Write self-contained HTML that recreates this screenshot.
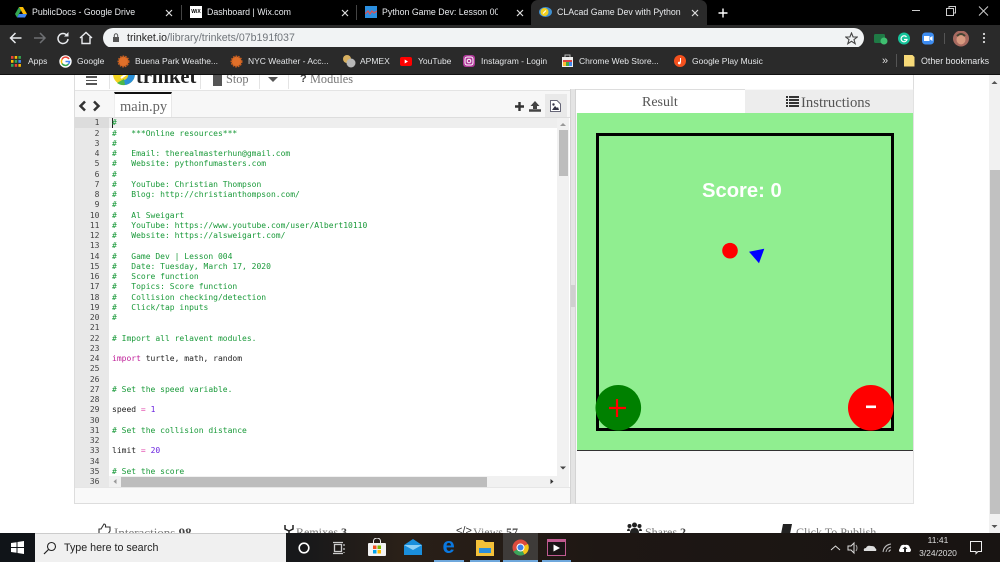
<!DOCTYPE html>
<html><head><meta charset="utf-8"><style>
html,body{margin:0;padding:0;width:1000px;height:562px;overflow:hidden;background:#fff}
div,span,svg,pre{position:absolute}
pre span{position:static}
.t{white-space:nowrap;font-family:"Liberation Sans",sans-serif}
.tab{color:#e8eaed;font-size:8.8px;top:6px;line-height:13px}
.bm{color:#e4e6e8;font-size:8.5px;top:55px;line-height:12px}
.s{font-family:"Liberation Serif",serif;white-space:nowrap}
.f{color:#777;font-size:12px;top:525.5px;line-height:13px;font-family:"Liberation Serif",serif;white-space:nowrap}
.f b{color:#444}
.c{color:#1a9a3a}.k{color:#c0209a}.n{color:#6a22e0}.o{color:#e040a8}
</style></head><body>
<!-- page content -->
<div style="left:74px;top:74px;height:15px;border-bottom:1px solid #ddd;border-left:1px solid #ddd;border-right:1px solid #ddd;box-sizing:content-box;width:838px"></div>
<div style="left:109px;top:74px;width:1px;height:15px;background:#e4e4e4"></div>
<div style="left:200px;top:74px;width:1px;height:15px;background:#e4e4e4"></div>
<div style="left:259px;top:74px;width:1px;height:15px;background:#e4e4e4"></div>
<div style="left:288px;top:74px;width:1px;height:15px;background:#e4e4e4"></div>
<div style="left:86px;top:76px;width:11px;height:1.500px;background:#555"></div>
<div style="left:86px;top:79.500px;width:11px;height:1.500px;background:#555"></div>
<div style="left:86px;top:83px;width:11px;height:1.500px;background:#555"></div>
<svg style="left:112px;top:72px" width="24" height="14"><circle cx="12" cy="2" r="11" fill="#f2d320"/><path d="M12 13A11 11 0 0 0 23 2L16 2A5 5 0 0 1 12 8Z" fill="#2a8fd8"/><path d="M5 11A11 11 0 0 0 13 13L12 7Z" fill="#4cb848"/><path d="M9 6L16 1" stroke="#fff" stroke-width="2"/></svg>
<div class="s" style="left:136px;top:65px;font-size:20.500px;font-weight:bold;color:#222;line-height:24px">trinket</div>
<div style="left:213px;top:74px;width:9px;height:12px;background:#555"></div>
<div class="s" style="left:226px;top:71.500px;font-size:12.300px;color:#777;line-height:14px">Stop</div>
<svg style="left:268px;top:77px" width="10" height="6"><path d="M0 0H10L5 5Z" fill="#555"/></svg>
<div class="t" style="left:300px;top:72px;font-size:11px;font-weight:bold;color:#444;line-height:14px">?</div>
<div class="s" style="left:310px;top:71.500px;font-size:12.300px;color:#777;line-height:14px">Modules</div>

<!-- editor -->
<div style="left:74px;top:89px;width:496px;height:415px;background:#fff;border-left:1px solid #ddd;border-bottom:1px solid #ddd;box-sizing:border-box"></div>
<div style="left:75px;top:90px;width:495px;height:27px;background:#f7f7f7;border-top:1px solid #e4e4e4;box-sizing:border-box"></div>
<div style="left:75px;top:116.500px;width:495px;height:1px;background:#ddd"></div>
<svg style="left:76px;top:100px" width="26" height="12"><path d="M9 1.500L4.500 6L9 10.500" fill="none" stroke="#333" stroke-width="2.500"/><path d="M18 1.500L22.500 6L18 10.500" fill="none" stroke="#333" stroke-width="2.500"/></svg>
<div style="left:114px;top:91.500px;width:58px;height:25.500px;background:#fff;box-sizing:border-box;border-top:2.500px solid #111;border-left:1px solid #eee;border-right:1px solid #e8e8e8"></div>
<div class="s" style="left:120px;top:97.500px;font-size:14.500px;color:#666;line-height:18px">main.py</div>
<svg style="left:514px;top:100px" width="30" height="13"><path d="M1 6.500H10M5.500 2V11" stroke="#333" stroke-width="2.400"/><path d="M21 1L25.500 6H23V9H19V6H16.500Z" fill="#444"/><path d="M15 10.500H27" stroke="#444" stroke-width="2.500"/></svg>
<div style="left:545px;top:94px;width:21.500px;height:22.500px;background:#e9e9e9"></div>
<svg style="left:550px;top:100px" width="11" height="12"><path d="M.5.500H7L10.500 4V11.500H.5Z" fill="#fff" stroke="#667"/><path d="M2 10L5 6L7 8L8 7L9 10Z" fill="#334"/><circle cx="3.500" cy="4.500" r="1.200" fill="#334"/></svg>
<div style="left:75px;top:117px;width:34px;height:370px;background:#e8e8e8"></div>
<div style="left:75px;top:117px;width:34px;height:10.500px;background:#dcdcdc"></div>
<div style="left:109px;top:117.500px;width:449px;height:10.500px;background:#eeeeee"></div>
<div style="left:112px;top:118px;width:1px;height:10px;background:#222"></div>
<pre style="left:75px;top:118.300px;width:24.500px;margin:0;text-align:right;font:8px/10.257px 'DejaVu Sans Mono',monospace;color:#444">1
2
3
4
5
6
7
8
9
10
11
12
13
14
15
16
17
18
19
20
21
22
23
24
25
26
27
28
29
30
31
32
33
34
35
36</pre>
<pre style="left:112px;top:118.300px;margin:0;height:357px;overflow:hidden;font:8px/10.257px 'DejaVu Sans Mono',monospace;color:#222"><span class="c">#
#   ***Online resources***
#
#   Email: therealmasterhun@gmail.com
#   Website: pythonfumasters.com
#
#   YouTube: Christian Thompson
#   Blog: http://christianthompson.com/
#
#   Al Sweigart
#   YouTube: https://www.youtube.com/user/Albert10110
#   Website: https://alsweigart.com/
#
#   Game Dev | Lesson 004
#   Date: Tuesday, March 17, 2020
#   Score function
#   Topics: Score function
#   Collision checking/detection
#   Click/tap inputs
#

# Import all relavent modules.
</span>
<span class="k">import</span> turtle, math, random


<span class="c"># Set the speed variable.</span>

speed <span class="o">=</span> <span class="n">1</span>

<span class="c"># Set the collision distance</span>

limit <span class="o">=</span> <span class="n">20</span>

<span class="c"># Set the score</span></pre>
<!-- code scrollbars -->
<div style="left:557px;top:117.500px;width:12px;height:370px;background:#f1f1f1"></div>
<svg style="left:558px;top:121px" width="10" height="6"><path d="M2 5H8L5 2Z" fill="#999"/></svg>
<div style="left:559px;top:130px;width:9px;height:46px;background:#bdbdbd"></div>
<svg style="left:558px;top:465px" width="10" height="6"><path d="M2 1.500H8L5 4.500Z" fill="#444"/></svg>
<div style="left:109px;top:476px;width:449px;height:11px;background:#f1f1f1"></div>
<svg style="left:112px;top:477px" width="6" height="9"><path d="M4.500 2V7L1.500 4.500Z" fill="#999"/></svg>
<div style="left:121px;top:476.500px;width:366px;height:10px;background:#bdbdbd"></div>
<svg style="left:549px;top:477px" width="6" height="9"><path d="M1.500 2V7L4.500 4.500Z" fill="#333"/></svg>
<div style="left:75px;top:487px;width:495px;height:16px;background:#f9f9f9;border-top:1px solid #e6e6e6;box-sizing:border-box"></div>
<!-- divider -->
<div style="left:570px;top:89px;width:6px;height:415px;background:#e4e4e4;border-left:1px solid #d4d4d4;border-right:1px solid #d4d4d4;box-sizing:border-box"></div>
<div style="left:571px;top:285px;width:4px;height:22px;background:#cfcfcf"></div>

<!-- result panel -->
<div style="left:576px;top:89px;width:337.500px;height:415px;background:#f8f8f8;border-right:1px solid #e2e2e2;border-bottom:1px solid #e2e2e2;box-sizing:border-box"></div>
<div style="left:576px;top:89px;width:169px;height:24px;background:#fff;border-top:1px solid #ddd;box-sizing:border-box"></div>
<div style="left:745px;top:90px;width:168px;height:23px;background:#ededed"></div>
<div class="s" style="left:642px;top:94.500px;font-size:14px;color:#555;line-height:16px">Result</div>
<svg style="left:786px;top:96px" width="13" height="11"><path d="M0 1H2M3 1H13M0 4H2M3 4H13M0 7H2M3 7H13M0 10H2M3 10H13" stroke="#333" stroke-width="2"/></svg>
<div class="s" style="left:801px;top:94.500px;font-size:14.700px;color:#555;line-height:16px">Instructions</div>
<div style="left:577px;top:113px;width:336px;height:337px;background:#90ee90"></div>
<div style="left:577px;top:450px;width:336px;height:1px;background:#333"></div>
<div style="left:596px;top:133px;width:297.500px;height:298px;box-sizing:border-box;border:3.300px solid #000"></div>
<div class="t" style="left:702px;top:179.500px;font-size:20.200px;font-weight:bold;color:#fff;line-height:23px">Score: 0</div>
<svg style="left:577px;top:113px" width="336" height="337">
<circle cx="153" cy="137.700" r="7.800" fill="#f00"/>
<path d="M172 138.700L187.300 135.700L182 150.300Z" fill="#00f"/>
<circle cx="41.300" cy="294.800" r="22.800" fill="#008000"/>
<path d="M32 295H49M40 286V304" stroke="#f00" stroke-width="2.200" fill="none"/>
<circle cx="293.800" cy="294.800" r="22.800" fill="#f00"/>
<path d="M289 293.800H299" stroke="#fff" stroke-width="2.600" fill="none"/>
</svg>

<!-- page scrollbar -->
<div style="left:989px;top:75px;width:11px;height:458px;background:#f1f1f1"></div>
<svg style="left:989px;top:78px" width="11" height="8"><path d="M2.500 6H8.500L5.500 3Z" fill="#555"/></svg>
<div style="left:989.500px;top:170px;width:10px;height:344px;background:#c1c1c1"></div>
<svg style="left:989px;top:523px" width="11" height="8"><path d="M2.500 2H8.500L5.500 5Z" fill="#555"/></svg>

<!-- footer -->
<svg style="left:98px;top:523px" width="14" height="12"><path d="M1 11V6H3L6 1Q8 1 7.500 4H12V8L10 11Z" fill="none" stroke="#333" stroke-width="1.100"/></svg>
<div class="f" style="left:114px;font-size:13px">Interactions <b>98</b></div>
<svg style="left:283px;top:523px" width="12" height="12"><path d="M2 2V6L6 8V11M10 2V6L6 8" fill="none" stroke="#222" stroke-width="1.500"/></svg>
<div class="f" style="left:296px">Remixes <b>3</b></div>
<div class="t" style="left:456px;top:525px;font-size:11px;color:#333;line-height:13px">&lt;/&gt;</div>
<div class="f" style="left:473px">Views <b>57</b></div>
<svg style="left:627px;top:522px" width="15" height="11"><circle cx="7.500" cy="3" r="2.500" fill="#222"/><circle cx="2.500" cy="4" r="2" fill="#222"/><circle cx="12.500" cy="4" r="2" fill="#222"/><path d="M3 11Q3 6 7.500 6T12 11ZM0 9Q0 6.500 2.500 6.500L3 9ZM15 9Q15 6.500 12.500 6.500L12 9Z" fill="#222"/></svg>
<div class="f" style="left:645px">Shares <b>2</b></div>
<svg style="left:780px;top:524px" width="14" height="11"><path d="M3 0H12L10 10H1Z" fill="#222"/></svg>
<div class="f" style="left:796px">Click To Publish</div>

<!-- chrome tabs -->
<div style="left:0;top:0;width:1000px;height:25px;background:#000"></div>
<div style="left:531px;top:0;width:176px;height:25px;background:#2a2a2a;border-radius:7px 7px 0 0"></div>
<div style="left:181px;top:5px;width:1px;height:15px;background:#444"></div>
<div style="left:356px;top:5px;width:1px;height:15px;background:#444"></div>
<svg style="left:15px;top:7px" width="12" height="11"><path d="M4 0H8L12 7H8Z" fill="#fbbc04"/><path d="M4 0L0 7L2 10.500L6 3.500Z" fill="#34a853"/><path d="M2 10.500H10L12 7H4Z" fill="#4285f4"/></svg>
<div class="t tab" style="left:32px">PublicDocs - Google Drive</div>
<svg style="left:165px;top:9px" width="8" height="8"><path d="M1 1L7 7M7 1L1 7" stroke="#ddd" stroke-width="1.200"/></svg>
<div style="left:190px;top:6px;width:12px;height:12px;background:#fff;color:#000;font:bold 5px/12px 'Liberation Sans',sans-serif;text-align:center">WiX</div>
<div class="t tab" style="left:207px">Dashboard | Wix.com</div>
<svg style="left:341px;top:9px" width="8" height="8"><path d="M1 1L7 7M7 1L1 7" stroke="#ddd" stroke-width="1.200"/></svg>
<svg style="left:365px;top:6px" width="12" height="12"><rect width="12" height="12" fill="#2b8fe0"/><path d="M0 8L3 5L5 8L7 5L9 7L12 5" fill="none" stroke="#e05050" stroke-width="1.200"/></svg>
<div class="t tab" style="left:382px;width:116px;overflow:hidden">Python Game Dev: Lesson 003</div>
<svg style="left:516px;top:9px" width="8" height="8"><path d="M1 1L7 7M7 1L1 7" stroke="#ddd" stroke-width="1.200"/></svg>
<svg style="left:539px;top:6px" width="13" height="12"><ellipse cx="6.500" cy="6" rx="6.500" ry="5" fill="#3f8fd0"/><circle cx="5.500" cy="6" r="4" fill="#f3d020"/><path d="M4 7.500L7 4.500" stroke="#fff"/></svg>
<div class="t tab" style="left:557px;width:126px;overflow:hidden">CLAcad Game Dev with Python |</div>
<svg style="left:691px;top:9px" width="8" height="8"><path d="M1 1L7 7M7 1L1 7" stroke="#ddd" stroke-width="1.200"/></svg>
<svg style="left:717px;top:7px" width="12" height="12"><path d="M6 1.500V10.500M1.500 6H10.500" stroke="#fff" stroke-width="1.400"/></svg>
<svg style="left:908px;top:4px" width="90" height="14"><path d="M4 6.500H12" stroke="#ccc"/><path d="M38.500 4.500H45.500V11.500H38.500ZM41 4.500V2.500H47.500V9H45.500" fill="none" stroke="#ccc"/><path d="M71 2.500L80 11.500M80 2.500L71 11.500" stroke="#ccc"/></svg>

<!-- toolbar -->
<div style="left:0;top:25px;width:1000px;height:22px;background:#2a2a2a"></div>
<svg style="left:8px;top:30px" width="88" height="16"><path d="M2.500 8H13.500M7.500 3L2.500 8L7.500 13" fill="none" stroke="#e8eaed" stroke-width="1.500"/><path d="M26 8H37M32 3L37 8L32 13" fill="none" stroke="#6e7073" stroke-width="1.500"/><path d="M59 5.500A5 5 0 1 0 60 9" fill="none" stroke="#e8eaed" stroke-width="1.500"/><path d="M60.500 2V6.500H56Z" fill="#e8eaed"/><path d="M72 8L78 2.500L84 8M74 7V13.500H82V7" fill="none" stroke="#e8eaed" stroke-width="1.400"/></svg>
<div style="left:103px;top:27.500px;width:761px;height:20.500px;background:#f1f3f4;border-radius:10px"></div>
<svg style="left:112px;top:33px" width="8" height="10"><rect x="1" y="4" width="6" height="5" fill="#555"/><path d="M2.300 4V2.500A1.700 1.700 0 0 1 5.700 2.500V4" fill="none" stroke="#555"/></svg>
<div class="t" style="left:127px;top:31px;font-size:10.600px;line-height:14px;color:#70757a"><span style="position:static;color:#222">trinket.io</span>/library/trinkets/07b191f037</div>
<svg style="left:845px;top:32px" width="13" height="13"><path d="M6.500 1L8.100 5H12.300L9 7.600L10.200 11.700L6.500 9.300L2.800 11.700L4 7.600L.7 5H4.900Z" fill="none" stroke="#444" stroke-width="1.100"/></svg>
<svg style="left:873px;top:31px" width="100" height="16"><rect x="1" y="3" width="11" height="9" rx="1.500" fill="#1f7a45"/><circle cx="11" cy="10" r="3.500" fill="#3fbf70"/><circle cx="31" cy="7.500" r="6" fill="#15c39a"/><path d="M33.500 6A3 3 0 1 0 34 8.500H31" fill="none" stroke="#fff" stroke-width="1.200"/><rect x="49" y="1.500" width="12" height="12" rx="3.500" fill="#3d8cf0"/><rect x="51" y="5" width="5.500" height="5" fill="#fff"/><path d="M57 6.500L59.500 5V10L57 8.500Z" fill="#fff"/><rect x="71" y="2" width="1" height="11" fill="#555"/><circle cx="88" cy="7.500" r="8" fill="#a86a60"/><ellipse cx="88" cy="8.500" rx="4.500" ry="5" fill="#d89a80"/><path d="M84 5Q88 1 92 5" stroke="#443" stroke-width="2" fill="none"/></svg>
<svg style="left:982px;top:32px" width="4" height="13"><circle cx="2" cy="2" r="1.100" fill="#ddd"/><circle cx="2" cy="6" r="1.100" fill="#ddd"/><circle cx="2" cy="10" r="1.100" fill="#ddd"/></svg>

<!-- bookmarks -->
<div style="left:0;top:47px;width:1000px;height:27px;background:#2a2a2a"></div>
<div style="left:0;top:74px;width:1000px;height:1px;background:#111"></div>
<svg style="left:11px;top:56px" width="10" height="11"><g><rect x="0" y="0" width="2.500" height="2.800" fill="#e94235"/><rect x="3.700" y="0" width="2.500" height="2.800" fill="#fbbc04"/><rect x="7.400" y="0" width="2.500" height="2.800" fill="#34a853"/><rect x="0" y="4" width="2.500" height="2.800" fill="#fbbc04"/><rect x="3.700" y="4" width="2.500" height="2.800" fill="#34a853"/><rect x="7.400" y="4" width="2.500" height="2.800" fill="#4285f4"/><rect x="0" y="8" width="2.500" height="2.800" fill="#34a853"/><rect x="3.700" y="8" width="2.500" height="2.800" fill="#e94235"/><rect x="7.400" y="8" width="2.500" height="2.800" fill="#fbbc04"/></g></svg>
<div class="t bm" style="left:28px">Apps</div>
<svg style="left:59px;top:55px" width="13" height="13"><circle cx="6.500" cy="6.500" r="6.200" fill="#fff"/><path d="M10 4A4 4 0 0 0 3 4.500" fill="none" stroke="#ea4335" stroke-width="1.500"/><path d="M3 4.500A4 4 0 0 0 3 8.500" fill="none" stroke="#fbbc04" stroke-width="1.500"/><path d="M3 8.500A4 4 0 0 0 9.500 9" fill="none" stroke="#34a853" stroke-width="1.500"/><path d="M6.500 6.500H10.500A4 4 0 0 1 9.500 9" fill="none" stroke="#4285f4" stroke-width="1.500"/></svg>
<div class="t bm" style="left:77px">Google</div>
<svg style="left:117px;top:55px" width="13" height="13"><circle cx="6.500" cy="6.500" r="5" fill="#e0702a" stroke="#c85f20" stroke-dasharray="1.500 1" stroke-width="2"/></svg>
<div class="t bm" style="left:135px">Buena Park Weathe...</div>
<svg style="left:230px;top:55px" width="13" height="13"><circle cx="6.500" cy="6.500" r="5" fill="#e0702a" stroke="#c85f20" stroke-dasharray="1.500 1" stroke-width="2"/></svg>
<div class="t bm" style="left:248px">NYC Weather - Acc...</div>
<svg style="left:342px;top:54px" width="14" height="14"><circle cx="5" cy="5" r="4" fill="#d8b060"/><circle cx="9" cy="9" r="4.500" fill="#b8b8b8"/></svg>
<div class="t bm" style="left:360px">APMEX</div>
<svg style="left:400px;top:57px" width="12" height="9"><rect width="12" height="9" rx="2" fill="#f00"/><path d="M4.700 2.500L8 4.500L4.700 6.500Z" fill="#fff"/></svg>
<div class="t bm" style="left:418px">YouTube</div>
<svg style="left:463px;top:55px" width="12" height="12"><rect width="12" height="12" rx="3" fill="#b03a9a"/><rect x="2" y="2" width="8" height="8" rx="2.200" fill="none" stroke="#fff"/><circle cx="6" cy="6" r="1.800" fill="none" stroke="#fff"/></svg>
<div class="t bm" style="left:481px">Instagram - Login</div>
<svg style="left:562px;top:54px" width="11" height="13"><rect x="0" y="3" width="11" height="10" fill="#eee"/><path d="M3 3V1H8V3" fill="none" stroke="#bbb"/><path d="M1 8H10V6H1Z" fill="#d44"/><path d="M1 8H4V12H1Z" fill="#fb3"/><path d="M4 8H7V12H4Z" fill="#4a4"/><path d="M7 8H10V12H7Z" fill="#48e"/></svg>
<div class="t bm" style="left:579px">Chrome Web Store...</div>
<svg style="left:674px;top:55px" width="12" height="12"><circle cx="6" cy="6" r="6" fill="#f4511e"/><path d="M6.500 3V7.500" stroke="#fff"/><circle cx="5.300" cy="8" r="1.400" fill="#fff"/></svg>
<div class="t bm" style="left:692px">Google Play Music</div>
<div class="t" style="left:882px;top:55px;font-size:11px;line-height:13px;color:#ddd">»</div>
<div style="left:896px;top:54px;width:1px;height:13px;background:#555"></div>
<svg style="left:904px;top:55px" width="11" height="12"><path d="M0 0H8.500L10.500 2V11.500H0Z" fill="#f6d978"/></svg>
<div class="t bm" style="left:921px;font-size:8.900px">Other bookmarks</div>

<!-- taskbar -->
<div style="left:0;top:533px;width:1000px;height:29px;background:linear-gradient(90deg,#101418 0,#17181a 30%,#2a2018 40%,#1e1714 60%,#181412 100%)"></div>
<svg style="left:11px;top:541px" width="13" height="13"><path d="M0 2L5.500 1.200V6H0ZM6.500 1L13 0V6H6.500ZM0 7H5.500V11.800L0 11ZM6.500 7H13V13L6.500 12Z" fill="#fff"/></svg>
<div style="left:35px;top:533px;width:251px;height:29px;background:#f0f0f0;border-top:1px solid #ccc;box-sizing:border-box"></div>
<svg style="left:43px;top:541px" width="14" height="14"><circle cx="8.500" cy="5.500" r="4" fill="none" stroke="#222" stroke-width="1.100"/><path d="M5.500 8.500L1 13" stroke="#222" stroke-width="1.200"/></svg>
<div class="t" style="left:64px;top:541px;font-size:10.700px;line-height:14px;color:#222">Type here to search</div>
<svg style="left:297px;top:541px" width="14" height="14"><circle cx="7" cy="7" r="4.800" fill="none" stroke="#fff" stroke-width="1.600"/></svg>
<svg style="left:332px;top:541px" width="14" height="14"><path d="M2.500 3.500H9.500V10.500H2.500Z" fill="none" stroke="#ccc" stroke-width="1.300"/><path d="M1 1.500H11M1 12.500H11M12 3V5M12 7V9M12 11V12" stroke="#ccc" stroke-width="1.200"/></svg>
<svg style="left:368px;top:538px" width="18" height="19"><path d="M5.500 5V3A3.500 3 0 0 1 12.500 3V5" fill="none" stroke="#eee"/><rect y="5" width="18" height="13" rx="1" fill="#f3f3f3"/><rect x="5" y="7.500" width="3.500" height="3.500" fill="#f25022"/><rect x="9.500" y="7.500" width="3.500" height="3.500" fill="#7fba00"/><rect x="5" y="12" width="3.500" height="3.500" fill="#00a4ef"/><rect x="9.500" y="12" width="3.500" height="3.500" fill="#ffb900"/></svg>
<svg style="left:404px;top:539px" width="18" height="17"><path d="M0 6L9 0L18 6V16H0Z" fill="#1a8fdd"/><path d="M0 6L9 11L18 6" fill="#8fd0f5"/></svg>
<div class="t" style="left:442.500px;top:533px;font-size:22px;font-weight:bold;line-height:26px;color:#0a78e0">e</div>
<div style="left:434px;top:560px;width:30px;height:2px;background:#6fa8dc"></div>
<svg style="left:476px;top:540px" width="18" height="16"><path d="M0 0H7L9 2H18V16H0Z" fill="#f3c13a"/><rect x="3" y="8" width="12" height="5" fill="#2b8fdc"/></svg>
<div style="left:470px;top:560px;width:30px;height:2px;background:#6fa8dc"></div>
<div style="left:503px;top:533px;width:35px;height:29px;background:#3e3b39"></div>
<svg style="left:512px;top:539px" width="17" height="17"><circle cx="8.500" cy="8.500" r="8" fill="#dd4b3e"/><path d="M8.500 8.500L1.500 12.500A8 8 0 0 0 12.500 15.500Z" fill="#3ba55a"/><path d="M8.500 8.500L12.500 15.500A8 8 0 0 0 16 5Z" fill="#f5c518"/><circle cx="8.500" cy="8.500" r="3.500" fill="#3f80e8" stroke="#fff"/></svg>
<div style="left:503px;top:560px;width:35px;height:2px;background:#6fa8dc"></div>
<svg style="left:547px;top:539px" width="19" height="17"><rect x=".5" y=".5" width="18" height="16" fill="#1a1416" stroke="#c05a90"/><path d="M1 .5H18V3H1Z" fill="#c05a90"/><path d="M6.500 5.500V12.500L13 9Z" fill="#fff"/></svg>
<div style="left:542px;top:560px;width:29px;height:2px;background:#6fa8dc"></div>
<svg style="left:830px;top:540px" width="82" height="16"><path d="M1 10L5.500 6L10 10" fill="none" stroke="#ddd"/><path d="M18 6H21L24 3V13L21 10H18Z" fill="none" stroke="#ddd"/><path d="M26 5Q28 8 26 11" fill="none" stroke="#aaa"/><path d="M34 11Q33 8 36 8Q37 5 41 6Q45 6 45 8Q47 9 46 11Z" fill="#ddd"/><path d="M53 12Q54 5 61 4M56 12Q56.500 8 61 7M59 12Q59 10 61 10" fill="none" stroke="#bbb"/><path d="M70 12Q68 11 70 8Q71 4 75 5Q79 4 80 8Q82 10 80 12Z" fill="#fff"/><path d="M75 6.500L72.500 9H74V12H76V9H77.500Z" fill="#222"/></svg>
<div class="t" style="left:912px;top:534px;width:52px;text-align:center;font-size:8.500px;line-height:12.500px;color:#ddd">11:41<br>3/24/2020</div>
<svg style="left:969px;top:540px" width="14" height="15"><path d="M1.500 1.500H12.500V11.500H9L7 13.500V11.500H1.500Z" fill="none" stroke="#eee"/></svg>
</body></html>
